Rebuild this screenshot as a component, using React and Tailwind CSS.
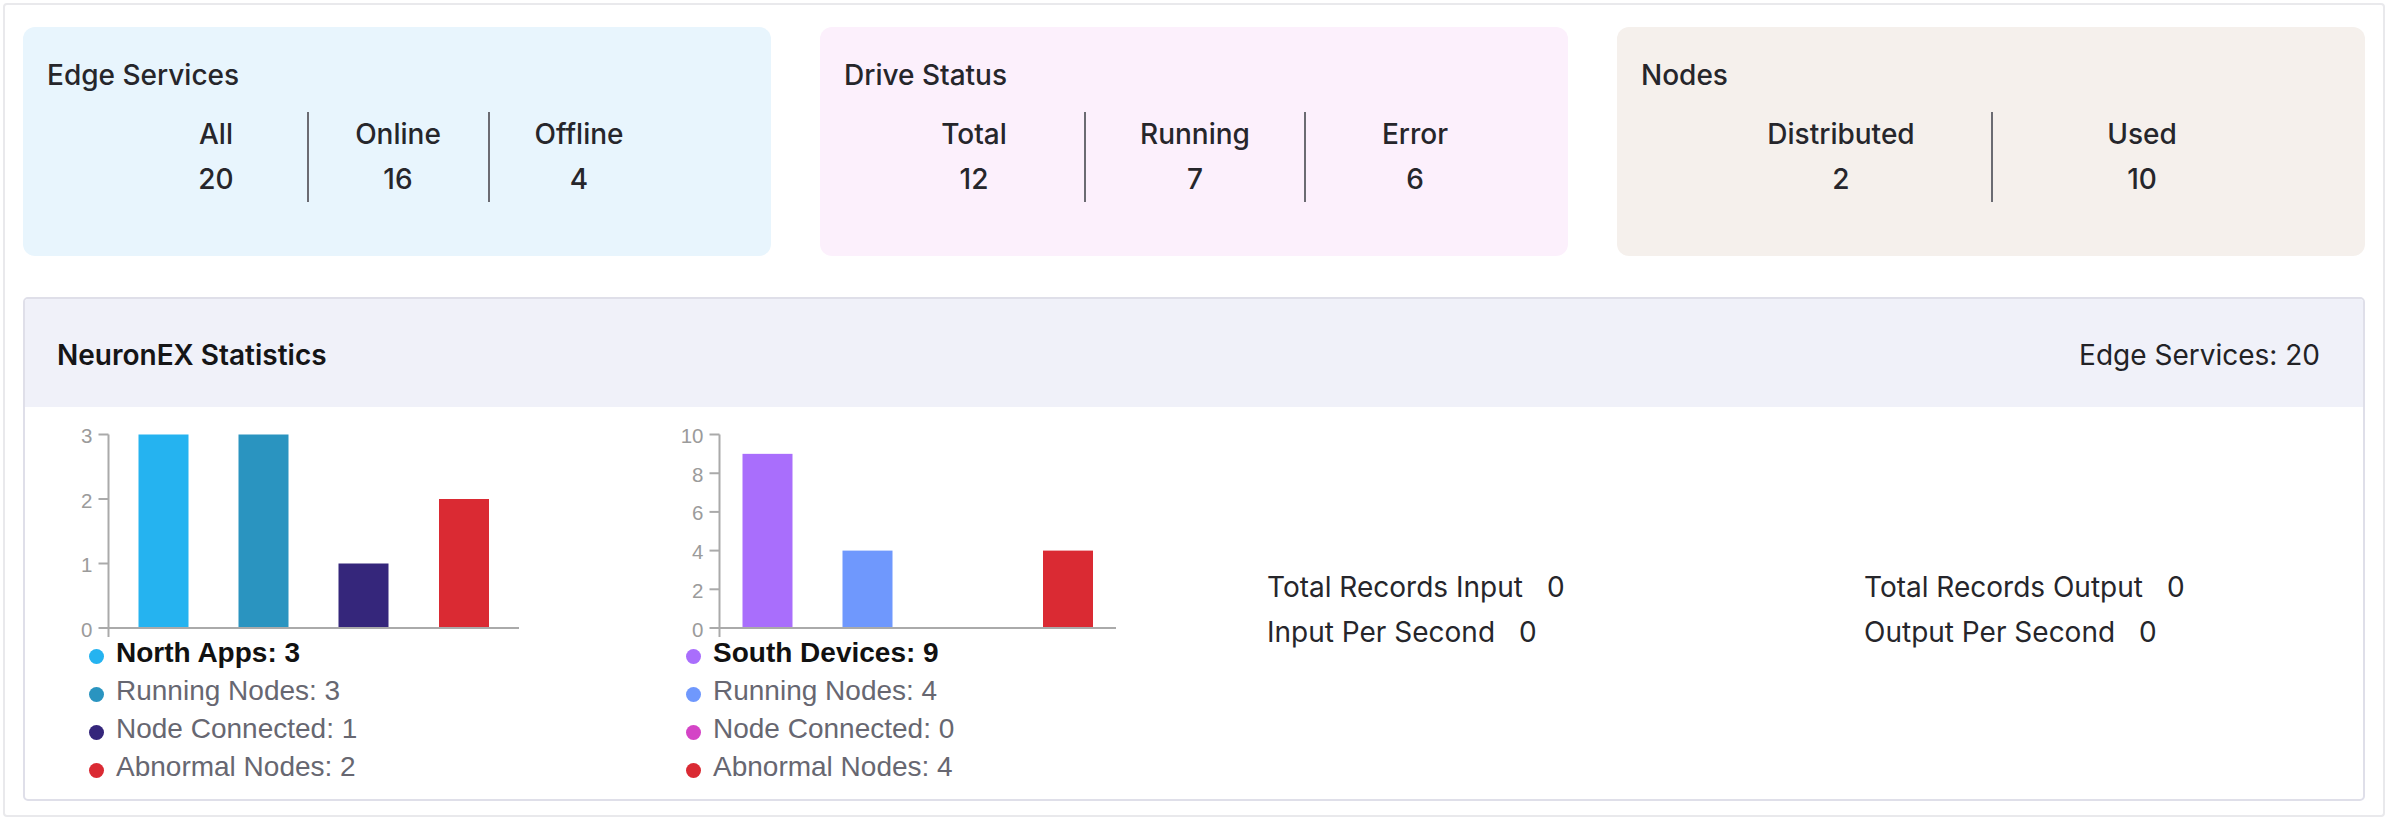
const SANS = "[font-family:Inter,'Noto_Sans',sans-serif]";

function StatCard({ title, bg, colW, items }) {
  return (
    <div className={`h-[229px] rounded-[12px] px-[24px] pt-[26px] ${bg}`}>
      <div className="text-[28px] leading-[45px] font-medium text-[#26262b]">{title}</div>
      <div className="mt-[14px] flex justify-center">
        {items.map((it, i) => (
          <div
            key={it.label}
            className={`${colW} text-center text-[28px] leading-[45px] font-medium text-[#26262b] ${
              i > 0 ? "border-l-2 border-[#6b6b72]" : ""
            }`}
          >
            <div>{it.label}</div>
            <div>{it.value}</div>
          </div>
        ))}
      </div>
    </div>
  );
}

function BarChart({ ticks, max, axisX, bars, legend }) {
  const top = 27.5;
  const base = 221;
  const scale = (base - top) / max;
  return (
    <div className="w-[597px] shrink-0 flex flex-col">
      <svg width="597" height="227" className="block overflow-visible">
        {ticks.map((t) => {
          const y = base - t * scale;
          return (
            <g key={t}>
              <line x1={axisX - 10} x2={axisX} y1={y} y2={y} stroke="#aaaaaa" strokeWidth="2" />
              <text
                x={axisX - 16}
                y={y + 1}
                textAnchor="end"
                dominantBaseline="central"
                fontSize="20.5"
                fill="#9b9b9b"
                fontFamily="'Liberation Sans', Arial, sans-serif"
              >
                {t}
              </text>
            </g>
          );
        })}
        {bars.map((b, i) =>
          b.v > 0 ? (
            <rect key={i} x={b.x} y={base - b.v * scale} width="50" height={b.v * scale} fill={b.color} />
          ) : null
        )}
        <line x1={axisX} x2={axisX} y1={top} y2={base + 9} stroke="#aaaaaa" strokeWidth="2" />
        <line x1={axisX} x2={494} y1={base} y2={base} stroke="#aaaaaa" strokeWidth="2" />
      </svg>
      <div className="flex flex-col pl-[64px] [font-family:'Liberation_Sans',Arial,sans-serif] text-[28px] leading-[38px]">
        {legend.map((l, i) => (
          <div key={l.text} className="flex items-center gap-[12px]">
            <span className={`mt-[6px] w-[15px] h-[15px] rounded-full shrink-0 ${l.dot}`} />
            <span className={i === 0 ? "font-bold text-[#111111]" : "text-[#676771]"}>{l.text}</span>
          </div>
        ))}
      </div>
    </div>
  );
}

function RecordCol({ rows, grow }) {
  return (
    <div
      className={`${grow ? "flex-1 min-w-0" : "w-[597px] shrink-0"} pl-[48px] pt-[158px] text-[28px] leading-[45px] text-[#26262b]`}
    >
      {rows.map((r) => (
        <div key={r[0]} className="flex">
          <span>{r[0]}</span>
          <span className="ml-[24px]">{r[1]}</span>
        </div>
      ))}
    </div>
  );
}

export default function App() {
  return (
    <div className={`w-[2388px] h-[820px] p-[3px] bg-white ${SANS}`}>
      <div className="h-[814px] rounded-[4px] border-2 border-[#e9e9ec] px-[18px] pt-[22px]">
        <div className="grid grid-cols-3 gap-[49px]">
          <StatCard
            title="Edge Services"
            bg="bg-[#e8f5fd]"
            colW="w-[181px]"
            items={[
              { label: "All", value: "20" },
              { label: "Online", value: "16" },
              { label: "Offline", value: "4" },
            ]}
          />
          <StatCard
            title="Drive Status"
            bg="bg-[#fcf0fc]"
            colW="w-[220px]"
            items={[
              { label: "Total", value: "12" },
              { label: "Running", value: "7" },
              { label: "Error", value: "6" },
            ]}
          />
          <StatCard
            title="Nodes"
            bg="bg-[#f5f0ec]"
            colW="w-[300px]"
            items={[
              { label: "Distributed", value: "2" },
              { label: "Used", value: "10" },
            ]}
          />
        </div>

        <div className="mt-[41px] h-[504px] rounded-[5px] border-2 border-[#dfdfe9] overflow-hidden flex flex-col">
          <div className="h-[108px] shrink-0 bg-[#f0f1f9] flex items-center justify-between pl-[32px] pr-[43px] pt-[4px]">
            <div className="text-[28px] font-semibold text-[#151517]">NeuronEX Statistics</div>
            <div className="text-[28px] text-[#222226]">Edge Services: 20</div>
          </div>
          <div className="flex-1 flex">
            <BarChart
              ticks={[0, 1, 2, 3]}
              max={3}
              axisX={83.5}
              bars={[
                { x: 113.5, v: 3, color: "#25b3f0" },
                { x: 213.5, v: 3, color: "#2a94c0" },
                { x: 313.5, v: 1, color: "#35267b" },
                { x: 414, v: 2, color: "#da2a33" },
              ]}
              legend={[
                { text: "North Apps: 3", dot: "bg-[#25b3f0]" },
                { text: "Running Nodes: 3", dot: "bg-[#2a94c0]" },
                { text: "Node Connected: 1", dot: "bg-[#35267b]" },
                { text: "Abnormal Nodes: 2", dot: "bg-[#da2a33]" },
              ]}
            />
            <BarChart
              ticks={[0, 2, 4, 6, 8, 10]}
              max={10}
              axisX={97.5}
              bars={[
                { x: 120.5, v: 9, color: "#a96efc" },
                { x: 220.5, v: 4, color: "#6f98fd" },
                { x: 320.5, v: 0, color: "#d444c6" },
                { x: 421, v: 4, color: "#da2a33" },
              ]}
              legend={[
                { text: "South Devices: 9", dot: "bg-[#a96efc]" },
                { text: "Running Nodes: 4", dot: "bg-[#6f98fd]" },
                { text: "Node Connected: 0", dot: "bg-[#d444c6]" },
                { text: "Abnormal Nodes: 4", dot: "bg-[#da2a33]" },
              ]}
            />
            <RecordCol
              rows={[
                ["Total Records Input", "0"],
                ["Input Per Second", "0"],
              ]}
            />
            <RecordCol
              grow
              rows={[
                ["Total Records Output", "0"],
                ["Output Per Second", "0"],
              ]}
            />
          </div>
        </div>
      </div>
    </div>
  );
}
